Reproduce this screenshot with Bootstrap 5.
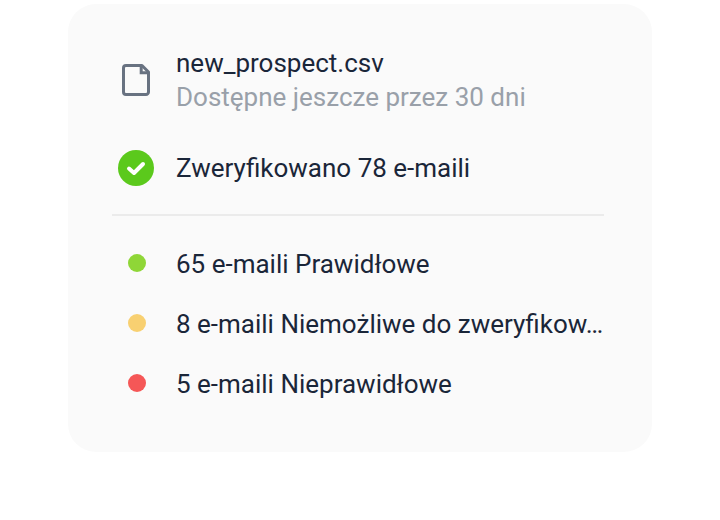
<!DOCTYPE html>
<html lang="pl">
<head>
<meta charset="utf-8">
<meta name="viewport" content="width=device-width, initial-scale=1">
<title>new_prospect.csv</title>
<link href="https://cdn.jsdelivr.net/npm/bootstrap@5.3.0/dist/css/bootstrap.min.css" rel="stylesheet">
<style>
  body { font-family: Roboto, sans-serif; font-size: 26px; line-height: 34px; color: #1a2639; background: #fff; }
  .page { padding: 4px 68px; }
  .result-card { --bs-card-bg: #fafafa; --bs-card-border-width: 0; --bs-card-border-radius: 28px; color: inherit; }
  .result-body { padding: 42px 44px 51px; }
  .slot { width: 48px; margin-right: 16px; }
  .expiry { color: #99a0a9; }
  .verified { margin-top: 36px; }
  .rule { margin: 28px 4px 31px 0; border-top: 2px solid #ebebeb; opacity: 1; }
  .counts { gap: 26px; }
  .counts .slot { padding: 0 0 2px 2px; }
  .dot { width: 18px; height: 18px; }
  .valid { background: #8fd637; }
  .unknown { background: #f8d071; }
  .invalid { background: #f55757; }
</style>
</head>
<body>
<main class="page">
  <section class="card result-card">
    <div class="result-body">
      <div class="d-flex align-items-center">
        <span class="slot flex-shrink-0 d-flex justify-content-center">
          <svg width="32" height="36" viewBox="0 0 32 36" fill="none" stroke="#687281" stroke-width="3" stroke-linejoin="round" aria-hidden="true"><path d="M22 3.500H6a2.500 2.500 0 0 0-2.500 2.500v24a2.500 2.500 0 0 0 2.500 2.500h20a2.500 2.500 0 0 0 2.500-2.500V10z"/><path d="M21.200 4v6.800H28" stroke-linejoin="miter"/></svg>
        </span>
        <div class="overflow-hidden">
          <div class="text-truncate">new_prospect.csv</div>
          <div class="text-truncate expiry">Dostępne jeszcze przez 30 dni</div>
        </div>
      </div>
      <div class="d-flex align-items-center verified">
        <span class="slot flex-shrink-0 d-flex justify-content-center">
          <svg width="36" height="36" viewBox="0 0 36 36" fill="none" aria-hidden="true"><circle cx="18" cy="18" r="18" fill="#5bc91c"/><path d="m11 18.500 5 4.500 9-9" stroke="#fff" stroke-width="4" stroke-linecap="round" stroke-linejoin="round"/></svg>
        </span>
        <div class="text-truncate">Zweryfikowano 78 e-maili</div>
      </div>
      <hr class="rule">
      <ul class="list-unstyled d-flex flex-column mb-0 counts">
        <li class="d-flex align-items-center"><span class="slot flex-shrink-0 d-flex justify-content-center"><span class="dot rounded-circle valid"></span></span><span class="text-truncate">65 e-maili Prawidłowe</span></li>
        <li class="d-flex align-items-center"><span class="slot flex-shrink-0 d-flex justify-content-center"><span class="dot rounded-circle unknown"></span></span><span class="text-truncate">8 e-maili Niemożliwe do zweryfikow…</span></li>
        <li class="d-flex align-items-center"><span class="slot flex-shrink-0 d-flex justify-content-center"><span class="dot rounded-circle invalid"></span></span><span class="text-truncate">5 e-maili Nieprawidłowe</span></li>
      </ul>
    </div>
  </section>
</main>
<script src="https://cdn.jsdelivr.net/npm/bootstrap@5.3.0/dist/js/bootstrap.bundle.min.js"></script>
</body>
</html>
